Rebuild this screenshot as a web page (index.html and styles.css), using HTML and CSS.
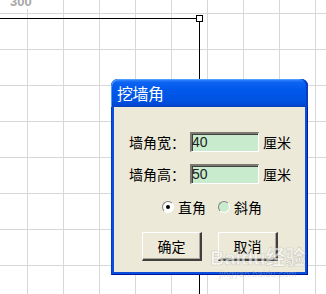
FILE: index.html
```html
<!DOCTYPE html>
<html>
<head>
<meta charset="utf-8">
<link rel="stylesheet" href="styles.css">
</head>
<body>
<div class="canvas">
  <div class="ruler-label">300</div>
  <div class="hline"></div>
  <div class="vline"></div>
  <div class="handle"></div>

  <div class="dialog">
    <div class="titlebar">挖墙角</div>
    <div class="body">
      <div class="row">
        <span class="label">墙角宽：</span>
        <span class="field">40</span>
        <span class="unit">厘米</span>
      </div>
      <div class="row row2">
        <span class="label">墙角高：</span>
        <span class="field">50</span>
        <span class="unit">厘米</span>
      </div>
      <div class="radios">
        <span class="radio checked"></span><span class="rlabel">直角</span>
        <span class="radio"></span><span class="rlabel">斜角</span>
      </div>
      <div class="buttons">
        <span class="btn">确定</span>
        <span class="btn">取消</span>
      </div>
    </div>
  </div>

  <div class="watermark">
    <div class="wm-big">Baidu经验</div>
    <div class="wm-small">jingyan.baidu.com</div>
  </div>
</div>
</body>
</html>
```

FILE: styles.css
```css
html, body {
  margin: 0;
  padding: 0;
  width: 326px;
  height: 294px;
  overflow: hidden;
  background: #fff;
}

.canvas {
  position: relative;
  width: 326px;
  height: 294px;
  background-color: #fff;
  background-image:
    linear-gradient(to right, #d8d8d8 1px, transparent 1px),
    linear-gradient(to bottom, #d8d8d8 1px, transparent 1px);
  background-size: 36px 36px;
  background-position: 27px 13px;
  font-family: "Noto Sans CJK SC", "Liberation Sans", sans-serif;
}

.ruler-label {
  position: absolute;
  left: 10px;
  top: -6px;
  font-family: "Liberation Sans", Arial, sans-serif;
  font-weight: bold;
  font-size: 13px;
  color: #a8a8a8;
  background: #fff;
  line-height: 15px;
}

.hline {
  position: absolute;
  left: 0;
  top: 18px;
  width: 199px;
  height: 1px;
  background: #000;
}

.vline {
  position: absolute;
  left: 199px;
  top: 18px;
  width: 1px;
  height: 280px;
  background: #000;
}

.handle {
  position: absolute;
  left: 196px;
  top: 15px;
  width: 5px;
  height: 5px;
  border: 1px solid #000;
  background: #fff;
}

.dialog {
  position: absolute;
  left: 111px;
  top: 79px;
  width: 197px;
  height: 196px;
  display: flex;
  flex-direction: column;
  border-radius: 7px 7px 0 0;
  background: #0a4fdc;
  box-shadow: inset -1px 0 0 #0019a0, inset 1px 0 0 #0838c8, inset 0 -1px 0 #0019a0;
}

.titlebar {
  height: 28px;
  flex: none;
  border-radius: 7px 7px 0 0;
  background: linear-gradient(to bottom, #3b8dff 0%, #0d63f2 12%, #0058ea 40%, #0053e2 75%, #0049d6 92%, #0a3fb8 100%);
  box-shadow: inset -2px 0 0 #0a3cc0, inset 1px 1px 0 #4c9cff;
  color: #fff;
  font-size: 16px;
  line-height: 28px;
  padding-left: 6px;
  letter-spacing: -0.5px;
}

.body {
  flex: 1;
  margin: 0 3px 3px 3px;
  background: #ece9d8;
  display: flex;
  flex-direction: column;
  padding: 25px 0 0 15px;
  font-size: 14px;
  color: #000;
}

.row {
  display: flex;
  align-items: center;
  height: 20px;
}

.row2 {
  margin-top: 12px;
}

.label {
  width: 61px;
  line-height: 20px;
  white-space: nowrap;
}

.field {
  box-sizing: border-box;
  width: 69px;
  height: 20px;
  background: #c8ebcd;
  border-style: solid;
  border-width: 2px 1px 1px 2px;
  border-color: #7a7a72 #fff #fff #7a7a72;
  box-shadow: inset 1px 1px 0 #404040;
  font-family: "Liberation Sans", Arial, sans-serif;
  font-size: 14px;
  line-height: 17px;
  padding-left: 0;
  color: #222;
}

.unit {
  margin-left: 4px;
  line-height: 20px;
}

.radios {
  display: flex;
  align-items: center;
  margin-top: 15px;
  margin-left: 33px;
  height: 16px;
}

.radio {
  box-sizing: border-box;
  width: 12px;
  height: 12px;
  border-radius: 50%;
  border: 1px solid;
  border-color: #808080 #fff #fff #808080;
  background: #fff;
  position: relative;
  margin-right: 4px;
}

.radio:not(.checked) {
  background: #c8ebcd;
}

.radio.checked::after {
  content: "";
  position: absolute;
  left: 3px;
  top: 3px;
  width: 4px;
  height: 4px;
  border-radius: 50%;
  background: #000;
}

.rlabel {
  line-height: 16px;
  margin-right: 12px;
}

.buttons {
  display: flex;
  margin-top: 17px;
  margin-left: 13px;
  gap: 16px;
}

.btn {
  box-sizing: border-box;
  width: 60px;
  height: 29px;
  display: flex;
  align-items: center;
  justify-content: center;
  background: #ece9d8;
  border-style: solid;
  border-width: 1px 2px 2px 1px;
  border-color: #fff #404040 #404040 #fff;
  box-shadow: inset -1px -1px 0 #aca899;
}

.watermark {
  position: absolute;
  left: 210px;
  top: 247px;
  text-align: center;
  pointer-events: none;
}

.wm-big {
  font-family: "Liberation Sans", "Noto Sans CJK SC", sans-serif;
  font-weight: bold;
  font-size: 20px;
  line-height: 22px;
  color: rgba(255, 255, 255, 0.6);
  -webkit-text-stroke: 0.6px rgba(140, 140, 140, 0.4);
}

.wm-small {
  font-family: "Liberation Sans", sans-serif;
  font-size: 9px;
  line-height: 10px;
  color: rgba(170, 170, 170, 0.4);
  letter-spacing: 0.3px;
}
```
